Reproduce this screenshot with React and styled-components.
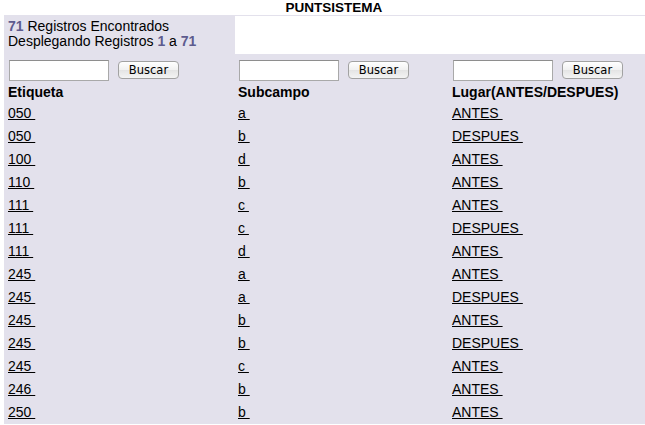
import styled, { createGlobalStyle } from 'styled-components';

const GlobalStyle = createGlobalStyle`
  html, body {
    margin: 0;
    padding: 0;
    background: #fff;
    overflow: hidden;
  }
  body {
    font-family: "Liberation Sans", Arial, sans-serif;
    font-size: 14px;
    color: #000;
  }
`;

const Page = styled.div`
  width: 660px;
  padding-left: 4px;
`;

const Title = styled.div`
  font-weight: bold;
  font-size: 13.5px;
  line-height: 15px;
  text-align: center;
`;

const Grid = styled.div`
  display: grid;
  grid-template-columns: 230px 214px 1fr;
  background: #e3e1ec;
  border-top: 1px solid #e3e1ec;
`;

const InfoCell = styled.div`
  padding: 3px 4px 5px;
  line-height: 15px;
`;

const BlankCell = styled.div`
  grid-column: span 2;
  background: #fff;
  margin-left: 1px;
`;

const Num = styled.span`
  color: #5d5b8e;
  font-weight: bold;
`;

const SearchCell = styled.div`
  display: flex;
  align-items: center;
  gap: 9px;
  padding: 5px 0 0 5px;
  height: 22px;
`;

const SearchInput = styled.input`
  box-sizing: border-box;
  width: 100px;
  height: 21px;
  margin: 0;
  border: 1px solid #a9a9a9;
  border-top-color: #8e8e8e;
  background: #fff;
  padding: 0 3px;
`;

const Button = styled.button`
  box-sizing: border-box;
  width: 61px;
  height: 18px;
  margin: 0;
  padding: 0;
  border: 1px solid #a2a2a2;
  border-radius: 4px;
  background: linear-gradient(#ffffff, #f1f1f1 50%, #e4e4e4 51%, #f4f4f4);
  font-family: "DejaVu Sans", sans-serif;
  font-size: 11.5px;
  line-height: 16px;
  color: #000;
`;

const HeadCell = styled.div`
  font-weight: bold;
  line-height: 15px;
  padding: 4px 4px 2px;
`;

const Cell = styled.div`
  line-height: 15px;
  padding: 4px 4px;
`;

const RowLink = styled.a`
  color: #000;
  text-decoration: underline;
  white-space: pre;
`;

const rows = [
  ['050', 'a', 'ANTES'],
  ['050', 'b', 'DESPUES'],
  ['100', 'd', 'ANTES'],
  ['110', 'b', 'ANTES'],
  ['111', 'c', 'ANTES'],
  ['111', 'c', 'DESPUES'],
  ['111', 'd', 'ANTES'],
  ['245', 'a', 'ANTES'],
  ['245', 'a', 'DESPUES'],
  ['245', 'b', 'ANTES'],
  ['245', 'b', 'DESPUES'],
  ['245', 'c', 'ANTES'],
  ['246', 'b', 'ANTES'],
  ['250', 'b', 'ANTES'],
];

function Search() {
  return (
    <SearchCell>
      <SearchInput type="text" />
      <Button type="button">Buscar</Button>
    </SearchCell>
  );
}

export default function App() {
  return (
    <Page>
      <GlobalStyle />
      <Title>PUNTSISTEMA</Title>
      <Grid>
        <InfoCell>
          <Num>71</Num> Registros Encontrados
          <br />
          Desplegando Registros <Num>1</Num> a <Num>71</Num>
        </InfoCell>
        <BlankCell />
        <Search />
        <Search />
        <Search />
        <HeadCell>Etiqueta</HeadCell>
        <HeadCell>Subcampo</HeadCell>
        <HeadCell>Lugar(ANTES/DESPUES)</HeadCell>
        {rows.map((r, i) =>
          r.map((v, j) => (
            <Cell key={`${i}-${j}`}>
              <RowLink href="#">{v + ' '}</RowLink>
            </Cell>
          ))
        )}
      </Grid>
    </Page>
  );
}
